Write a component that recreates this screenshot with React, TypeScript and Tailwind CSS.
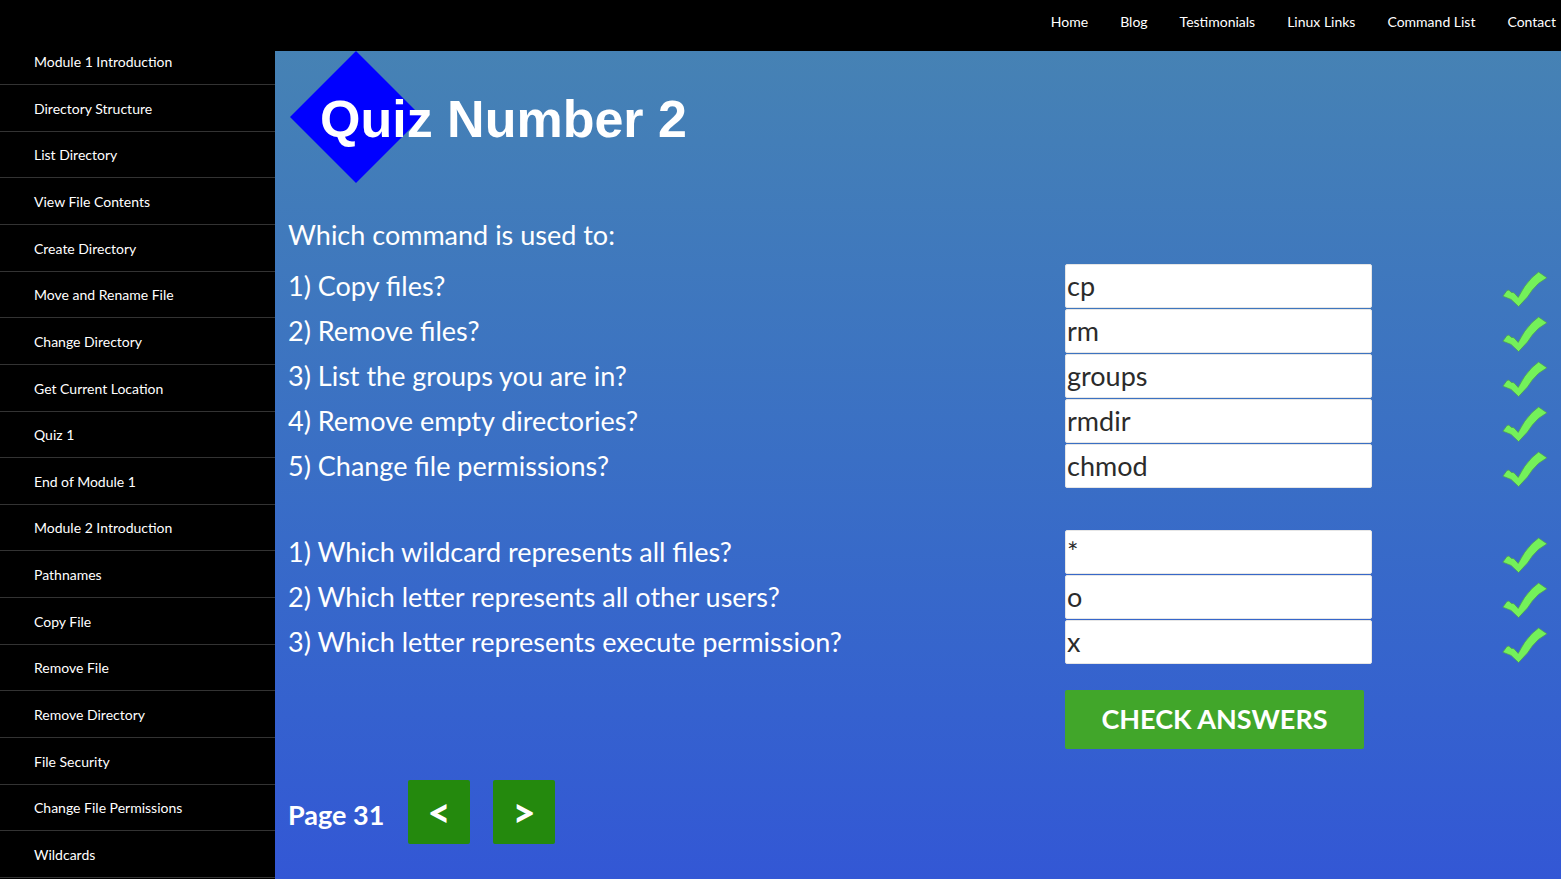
const navLinks = ["Home", "Blog", "Testimonials", "Linux Links", "Command List", "Contact"];

const lessons = [
  "Module 1 Introduction",
  "Directory Structure",
  "List Directory",
  "View File Contents",
  "Create Directory",
  "Move and Rename File",
  "Change Directory",
  "Get Current Location",
  "Quiz 1",
  "End of Module 1",
  "Module 2 Introduction",
  "Pathnames",
  "Copy File",
  "Remove File",
  "Remove Directory",
  "File Security",
  "Change File Permissions",
  "Wildcards",
];

type Question = { id: string; text: string; answer: string };

const commandQuestions: Question[] = [
  { id: "copy", text: "1) Copy files?", answer: "cp" },
  { id: "remove", text: "2) Remove files?", answer: "rm" },
  { id: "groups", text: "3) List the groups you are in?", answer: "groups" },
  { id: "rmdir", text: "4) Remove empty directories?", answer: "rmdir" },
  { id: "chmod", text: "5) Change file permissions?", answer: "chmod" },
];

const symbolQuestions: Question[] = [
  { id: "wildcard", text: "1) Which wildcard represents all files?", answer: "*" },
  { id: "others", text: "2) Which letter represents all other users?", answer: "o" },
  { id: "execute", text: "3) Which letter represents execute permission?", answer: "x" },
];

function Tick() {
  return (
    <svg viewBox="0 0 46 36" className="mt-[7px] h-9 w-[46px]" role="img" aria-label="Correct">
      <path
        d="M0.8 25.2 L5 19.4 L7 19 L9 21.2 L12 21.8 L16.2 26.4 Q22 14.5 30 6.5 L36.6 1 L39.5 3 L45 6.8 L36.5 12.4 Q29.5 19 25.5 26 L16.6 35.6 L9 28.4 Z"
        fill="#74f15a"
        stroke="#4d9a5c"
        strokeWidth="0.8"
        strokeLinejoin="round"
      />
    </svg>
  );
}

function QuestionRow({ question }: { question: Question }) {
  return (
    <div className="grid h-11 grid-cols-[777fr_437fr_59px]">
      <label htmlFor={question.id} className="leading-[43px]">
        {question.text}
      </label>
      <input
        id={question.id}
        type="text"
        defaultValue={question.answer}
        className="h-11 w-[307px] rounded-[2px] border border-[#e6e6e6] bg-white pb-0.5 pl-px text-[#2b2b2b] outline-none"
      />
      <Tick />
    </div>
  );
}

export default function App() {
  return (
    <div className="flex min-h-screen flex-col bg-black font-[Lato,sans-serif] text-white">
      <header className="flex h-[51px] shrink-0 justify-end pr-[5px]">
        <nav>
          <ul className="flex gap-8 text-[14px] leading-[44px]">
            {navLinks.map((label) => (
              <li key={label}>
                <a href="#">{label}</a>
              </li>
            ))}
          </ul>
        </nav>
      </header>
      <div className="flex flex-1">
        <aside className="flex w-[275px] shrink-0 flex-col pb-px">
          <ul className="grid flex-1 grid-rows-[34px_repeat(17,1fr)] text-[14px] leading-5">
            {lessons.map((label) => (
              <li key={label} className="flex items-end border-b border-[#333333] pb-3 pl-[34px]">
                <a href="#">{label}</a>
              </li>
            ))}
          </ul>
        </aside>
        <main className="flex-1 bg-linear-to-b from-[#4682b4] to-[#3357d5] pl-[13px] text-[27px]">
          <h1 className="flex h-[131px] items-center">
            <svg viewBox="0 0 132 132" className="ml-0.5 h-[132px] w-[132px] shrink-0" aria-hidden="true">
              <path d="M66 0 L132 66 L66 132 L0 66 Z" fill="#0000ff" />
            </svg>
            <span className="relative -ml-[102px] pt-1 font-['Liberation_Sans',Arial,sans-serif] text-[52px] leading-[60px] font-bold">
              Quiz Number 2
            </span>
          </h1>
          <form onSubmit={(event) => event.preventDefault()}>
            <p className="mt-8 leading-[42px]">Which command is used to:</p>
            <div className="mt-2 flex flex-col gap-px">
              {commandQuestions.map((question) => (
                <QuestionRow key={question.id} question={question} />
              ))}
            </div>
            <div className="mt-[42px] flex flex-col gap-px">
              {symbolQuestions.map((question) => (
                <QuestionRow key={question.id} question={question} />
              ))}
            </div>
            <div className="mt-[26px] grid grid-cols-[777fr_437fr_59px]">
              <button
                type="submit"
                className="col-start-2 h-[59px] w-[299px] rounded-[2px] bg-[#41a62a] font-bold uppercase"
              >
                Check Answers
              </button>
            </div>
          </form>
          <div className="mt-[31px] flex items-center font-bold">
            <span className="w-[120px] pt-1.5">Page 31</span>
            <div className="flex gap-[23px] font-black">
              <button type="button" aria-label="Previous page" className="h-16 w-[62px] rounded-[2px] bg-[#24890d] text-[40px]">
                &lt;
              </button>
              <button type="button" aria-label="Next page" className="h-16 w-[62px] rounded-[2px] bg-[#24890d] text-[40px]">
                &gt;
              </button>
            </div>
          </div>
        </main>
      </div>
    </div>
  );
}
